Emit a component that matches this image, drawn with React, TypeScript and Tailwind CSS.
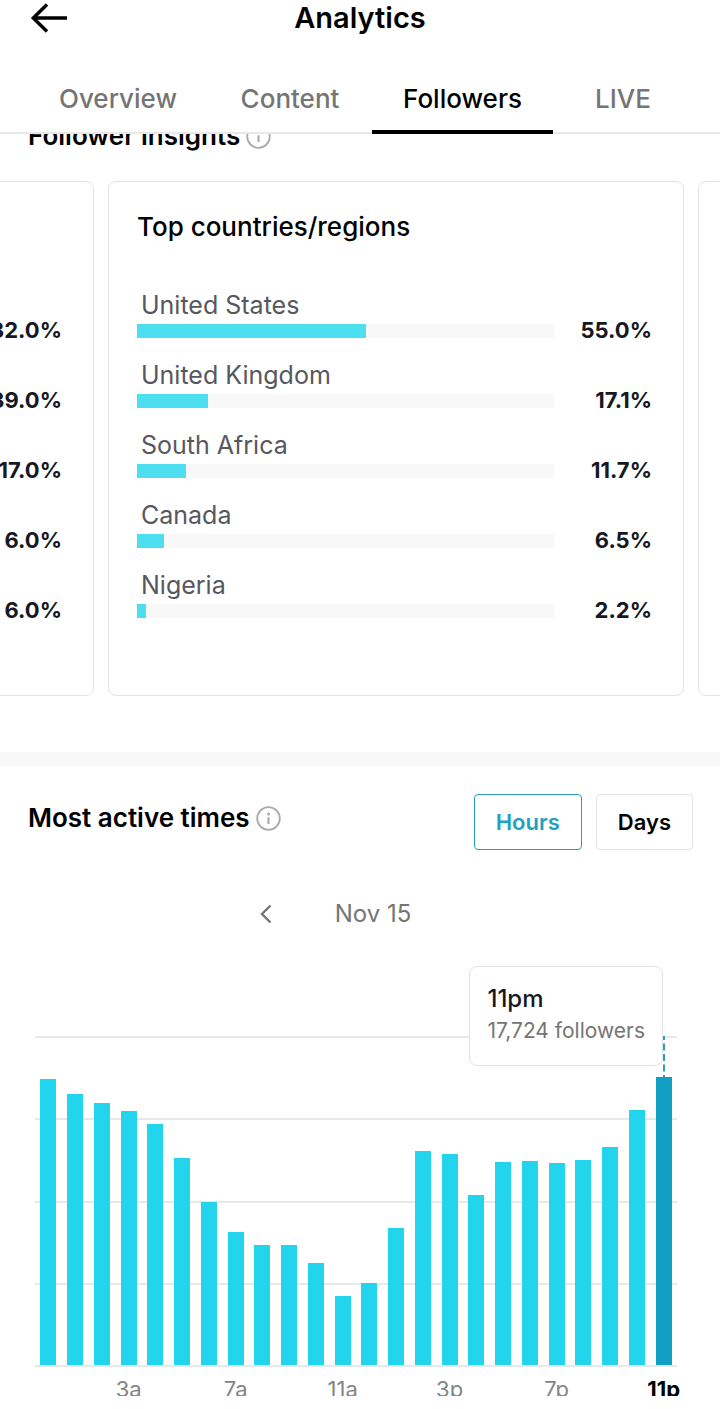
import { useState } from 'react';
import clsx from 'clsx';

const tabs = ['Overview', 'Content', 'Followers', 'LIVE'];

const ageShares = [32, 39, 17, 6, 6];

const countries = [
  { name: 'United States', share: 55 },
  { name: 'United Kingdom', share: 17.1 },
  { name: 'South Africa', share: 11.7 },
  { name: 'Canada', share: 6.5 },
  { name: 'Nigeria', share: 2.2 },
];

// bar heights in px, one per hour starting at midnight
const activity = [
  286, 271, 262, 254, 241, 207, 163, 133, 120, 120, 102, 69,
  82, 137, 214, 211, 170, 203, 204, 202, 205, 218, 255, 288,
];

const hourLabels = ['3a', '7a', '11a', '3p', '7p', '11p'];

function InfoIcon() {
  return (
    <svg width="25" height="25" viewBox="0 0 25 25" fill="none" className="text-[#ababab]">
      <circle cx="12.5" cy="12.5" r="11.3" stroke="currentColor" strokeWidth="1.8" />
      <circle cx="12.5" cy="8" r="1.5" fill="currentColor" />
      <path d="M12.5 11.3v6.6" stroke="currentColor" strokeWidth="2.2" />
    </svg>
  );
}

function ShareRow({ name, share }: { name?: string; share: number }) {
  return (
    <li className="grid h-[70px] grid-cols-[1fr_98px] grid-rows-[38px_14px]">
      <span className="pl-1 text-[25px] leading-[38px] text-[#57585e]">{name}</span>
      <div className="col-start-1 row-start-2 h-[14px] bg-[#f8f8f8]">
        <div className="h-full bg-[#4ddff0]" style={{ width: `${share}%` }} />
      </div>
      <span className="col-start-2 row-start-2 text-right text-[22px] leading-3 font-bold text-[#161823]">
        {share.toFixed(1)}%
      </span>
    </li>
  );
}

export default function App() {
  const [tab, setTab] = useState('Followers');
  const [range, setRange] = useState('Hours');

  return (
    <div className="overflow-x-hidden bg-white pb-[13px] font-['Inter',sans-serif] text-black">
      <header className="relative z-10 bg-white">
        <div className="relative flex h-9 items-center justify-center">
          <button aria-label="Back" className="absolute top-0 left-7">
            <svg width="42" height="36" viewBox="0 0 42 36" fill="none" stroke="#000" strokeWidth="3.4">
              <path d="M39 18H5M19 4.5 5.3 18 19 31.5" />
            </svg>
          </button>
          <h1 className="text-[29px] leading-9 font-semibold">Analytics</h1>
        </div>
        <div className="border-b-2 border-[#e8e8e8] pt-7 pr-[27px] pl-7">
          <nav className="-mb-[2px] grid grid-cols-[180fr_164fr_181fr_140fr]">
            {tabs.map((t) => (
              <button
                key={t}
                onClick={() => setTab(t)}
                className={clsx(
                  'h-[70px] border-b-4 pt-1 text-[26px] leading-[62px] font-medium',
                  t === tab ? 'border-black text-black' : 'border-transparent text-[#757575]',
                )}
              >
                {t}
              </button>
            ))}
          </nav>
        </div>
      </header>

      {/* Follower insights */}
      <section>
        <div className="-mt-[14px] flex h-8 items-center gap-[6px] px-7">
          <h2 className="text-[26px] leading-8 font-semibold">Follower insights</h2>
          <InfoIcon />
        </div>

        <div className="mt-[29px] flex gap-[14px] overflow-hidden">
          <div className="-ml-[482px] h-[515px] w-4/5 shrink-0 rounded-lg border border-[#e3e3e3] pt-[104px] pr-[31px] pl-7">
            <ul>
              {ageShares.map((s, i) => (
                <ShareRow key={i} share={s} />
              ))}
            </ul>
          </div>
          <div className="h-[515px] w-4/5 shrink-0 rounded-lg border border-[#e3e3e3] pt-[29px] pr-[31px] pl-7">
            <h3 className="mb-[43px] text-[26px] leading-8 font-medium">Top countries/regions</h3>
            <ul>
              {countries.map((c) => (
                <ShareRow key={c.name} name={c.name} share={c.share} />
              ))}
            </ul>
          </div>
          <div className="h-[515px] w-4/5 shrink-0 rounded-lg border border-[#e3e3e3]" />
        </div>
      </section>

      <div className="mt-14 h-[14px] bg-[#f8f8f8]" />

      {/* Most active times */}
      <section>
        <div className="flex items-start justify-between pt-7 pr-[27px] pl-7">
          <div className="flex h-12 items-center gap-[6px]">
            <h2 className="text-[26px] leading-8 font-semibold">Most active times</h2>
            <InfoIcon />
          </div>
          <div className="flex gap-[14px]">
            {['Hours', 'Days'].map((r) => (
              <button
                key={r}
                onClick={() => setRange(r)}
                className={clsx(
                  'h-14 rounded-sm border px-[21px] text-[22px] font-semibold',
                  r === range ? 'border-[#2ba0b8] text-[#1fa2bd]' : 'border-[#e3e3e3] text-black',
                )}
              >
                {r}
              </button>
            ))}
          </div>
        </div>

        <div className="mt-12 flex h-8 items-center justify-center pr-[50px]">
          <button aria-label="Previous day">
            <svg width="14" height="20" viewBox="0 0 14 20" fill="none" stroke="#757575" strokeWidth="2.4">
              <path d="M11.5 1.5 3 10l8.5 8.5" />
            </svg>
          </button>
          <span className="ml-[62px] text-[24px] leading-8 text-[#757575]">Nov 15</span>
        </div>

        <div className="mt-[106px] mr-[43px] ml-[35px]">
          <div className="relative h-[331px]">
            <div className="flex h-full flex-col justify-between">
              {[0, 1, 2, 3, 4].map((n) => (
                <div key={n} className="h-[2px] bg-[#e8e8e8]" />
              ))}
            </div>
            <div className="absolute inset-x-0 top-0 bottom-[2px] flex items-end">
              {activity.map((h, i) => (
                <div key={i} className="flex flex-1 flex-col items-center">
                  {i === 23 && (
                    <svg width="2" height="41" className="block">
                      <path d="M1 0v41" stroke="#2f9db5" strokeWidth="2" strokeDasharray="7 3.5" strokeDashoffset="3" />
                    </svg>
                  )}
                  <div
                    className={clsx('w-4', i === 23 ? 'bg-[#119fc4]' : 'bg-[#22d5ed]')}
                    style={{ height: h }}
                  />
                </div>
              ))}
            </div>
            <div className="absolute -top-[70px] right-[14px] h-[100px] rounded-lg border border-[#e3e3e3] bg-white px-[17px] pt-4">
              <p className="text-[24px] leading-8 font-medium text-[#161823]">11pm</p>
              <p className="text-[21px] leading-8 text-[#757575]">17,724 followers</p>
            </div>
          </div>

          <div className="grid h-[29px] grid-cols-24 overflow-y-clip pt-[6px] text-[22px] leading-8">
            {hourLabels.map((label) => (
              <span key={label} className="col-span-4 flex justify-end">
                <span
                  className={clsx(
                    'flex w-1/4 justify-center',
                    label === '11p' ? 'font-bold text-black' : 'text-[#858585]',
                  )}
                >
                  {label}
                </span>
              </span>
            ))}
          </div>
        </div>
      </section>
    </div>
  );
}
